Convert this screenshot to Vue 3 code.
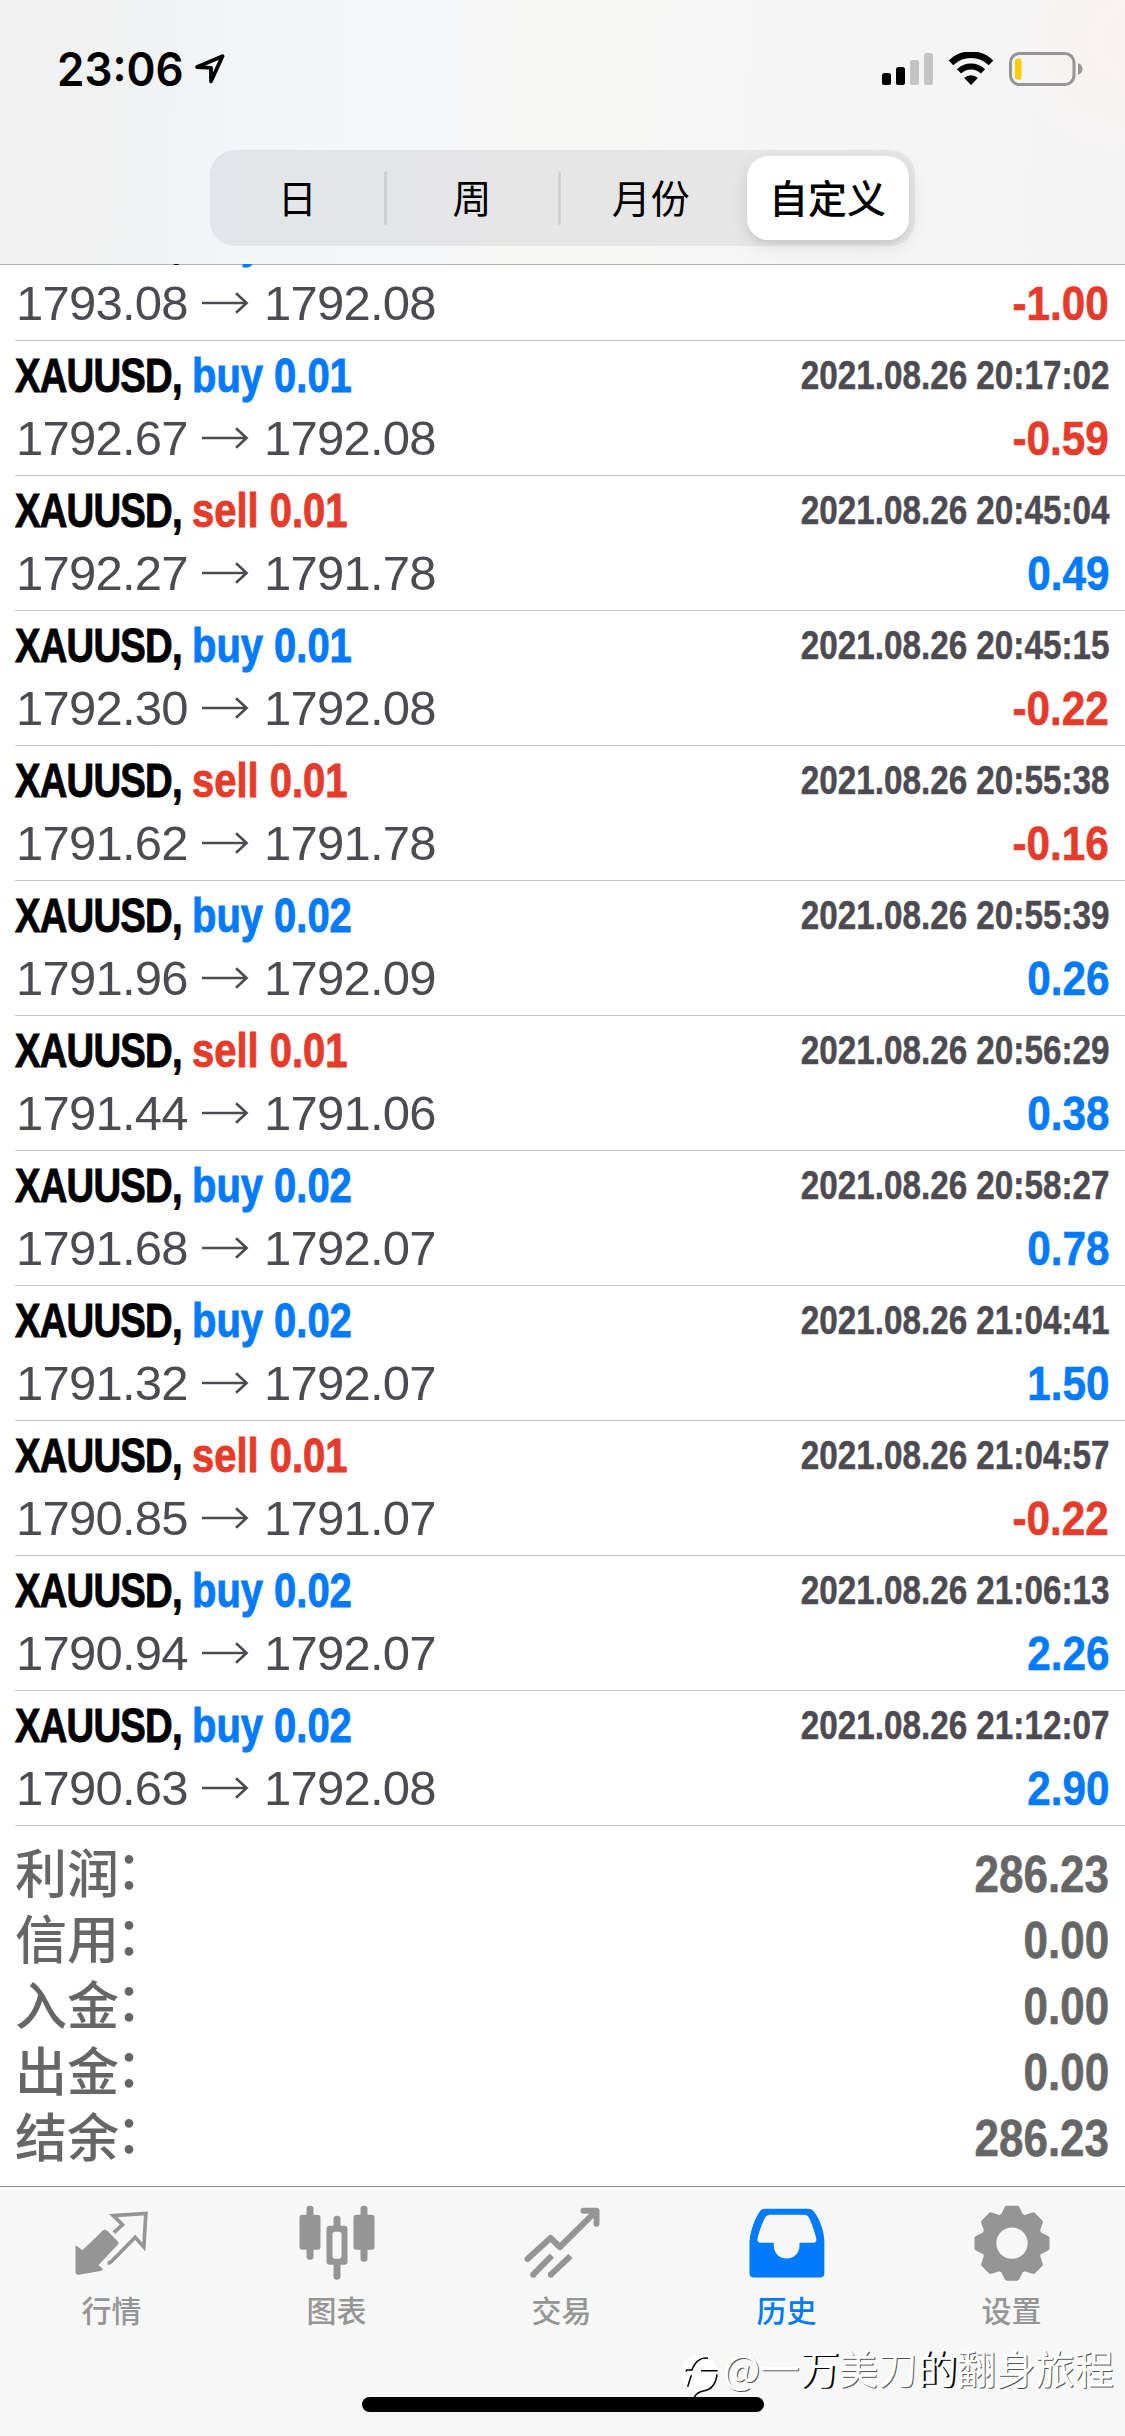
<script setup>
const segments = ['日', '周', '月份', '自定义']

const deals = [
  { side: 'buy', lot: '0.01', time: '', open: '1793.08', close: '1792.08', profit: '-1.00' },
  { side: 'buy', lot: '0.01', time: '2021.08.26 20:17:02', open: '1792.67', close: '1792.08', profit: '-0.59' },
  { side: 'sell', lot: '0.01', time: '2021.08.26 20:45:04', open: '1792.27', close: '1791.78', profit: '0.49' },
  { side: 'buy', lot: '0.01', time: '2021.08.26 20:45:15', open: '1792.30', close: '1792.08', profit: '-0.22' },
  { side: 'sell', lot: '0.01', time: '2021.08.26 20:55:38', open: '1791.62', close: '1791.78', profit: '-0.16' },
  { side: 'buy', lot: '0.02', time: '2021.08.26 20:55:39', open: '1791.96', close: '1792.09', profit: '0.26' },
  { side: 'sell', lot: '0.01', time: '2021.08.26 20:56:29', open: '1791.44', close: '1791.06', profit: '0.38' },
  { side: 'buy', lot: '0.02', time: '2021.08.26 20:58:27', open: '1791.68', close: '1792.07', profit: '0.78' },
  { side: 'buy', lot: '0.02', time: '2021.08.26 21:04:41', open: '1791.32', close: '1792.07', profit: '1.50' },
  { side: 'sell', lot: '0.01', time: '2021.08.26 21:04:57', open: '1790.85', close: '1791.07', profit: '-0.22' },
  { side: 'buy', lot: '0.02', time: '2021.08.26 21:06:13', open: '1790.94', close: '1792.07', profit: '2.26' },
  { side: 'buy', lot: '0.02', time: '2021.08.26 21:12:07', open: '1790.63', close: '1792.08', profit: '2.90' },
]

const totals = [
  ['利润', '286.23'],
  ['信用', '0.00'],
  ['入金', '0.00'],
  ['出金', '0.00'],
  ['结余', '286.23'],
]

// Outline of the settings gear: eight teeth around (120, 120).
const gear = Array.from({ length: 8 }, (_, i) => {
  const a = (i * Math.PI) / 4
  return [[-27, -81], [-15, -105], [15, -105], [27, -81]]
    .map(([x, y]) => {
      const px = 120 + x * Math.cos(a) - y * Math.sin(a)
      const py = 120 + x * Math.sin(a) + y * Math.cos(a)
      return `${px.toFixed(1)},${py.toFixed(1)}`
    })
    .join(' ')
}).join(' ')
</script>

<template>
  <div class="screen">
    <header class="top">
      <div class="status">
        <span class="clock">23:06</span>
        <svg class="locate" width="30" height="30" viewBox="0 0 30 30">
          <path d="M2 13 27.5 2.2 16 27.3V13.9Z" fill="none" stroke="#000" stroke-width="3.8" stroke-linejoin="round" />
        </svg>
        <svg class="signal" width="52" height="34" viewBox="0 0 52 34">
          <rect x="0" y="21" width="9" height="12" rx="2.6" />
          <rect x="14" y="15" width="9" height="18" rx="2.6" />
          <rect x="28" y="8" width="9" height="25" rx="2.6" fill="#c4c4c4" />
          <rect x="42" y="1" width="9" height="32" rx="2.6" fill="#c4c4c4" />
        </svg>
        <svg class="wifi" width="46" height="34" viewBox="0 0 46 34">
          <path d="M3 10.8A28.5 28.5 0 0 1 43 10.8" fill="none" stroke="#000" stroke-width="6.6" />
          <path d="M11 19.4A17.2 17.2 0 0 1 35 19.4" fill="none" stroke="#000" stroke-width="6.2" />
          <path d="M16.2 26A10 10 0 0 1 29.8 26L23 33Z" />
        </svg>
        <svg class="battery" width="75" height="34" viewBox="0 0 75 34">
          <rect x="1.5" y="1.5" width="63.5" height="31" rx="9" fill="none" stroke="#969494" stroke-width="3" />
          <rect x="6" y="6.5" width="6.5" height="21" rx="2.6" fill="#fc0" />
          <path d="M69 11.2Q73.5 13.2 73.5 17T69 23Z" fill="#969494" />
        </svg>
      </div>
      <div class="segments">
        <div v-for="(s, i) in segments" :key="s" :class="['segment', { on: i === 3, split: i === 1 || i === 2 }]">
          <span>{{ s }}</span>
        </div>
      </div>
    </header>

    <main class="history">
      <div v-for="(d, i) in deals" :key="i" class="deal">
        <div class="line head">
          <div class="symbol"><b>XAUUSD,</b></div>
          <b :class="['order', d.side]">{{ d.side }} {{ d.lot }}</b>
          <b class="time">{{ d.time }}</b>
        </div>
        <div class="line body">
          <span class="open">{{ d.open }}</span>
          <svg class="to" width="47" height="22" viewBox="0 0 47 22">
            <path d="M0 11H44M34 1.2 44.6 11 34 20.8" fill="none" stroke="#4d4b51" stroke-width="2.6" />
          </svg>
          <span>{{ d.close }}</span>
          <b :class="['profit', { loss: d.profit.startsWith('-') }]">{{ d.profit }}</b>
        </div>
      </div>
      <div class="totals">
        <div v-for="[label, value] in totals" :key="label" class="total">
          <span class="label">{{ label }}</span>
          <span class="colon">：</span>
          <b>{{ value }}</b>
        </div>
      </div>
    </main>

    <nav class="tabs">
      <div class="tab">
        <svg width="80" height="80" viewBox="217.5 70 240 240">
          <path d="M225 200Q225 196 229 199L246 212 306 153Q313 147 320 153L351 184Q357 190 351 196L294 256 306 267Q309 271 303 273L236 285Q225 286 225 276Z" fill="currentColor" />
          <path d="M340 159 366 135 338 108 436 101.5 430 202 404 173 331 247Q328 250 321 250" fill="none" stroke="currentColor" stroke-width="11" />
        </svg>
        <span>行情</span>
      </div>
      <div class="tab">
        <svg width="80" height="80" viewBox="892.5 70 240 240" fill="currentColor">
          <rect x="897" y="105" width="63" height="105" rx="9" />
          <rect x="918" y="78" width="21" height="162" rx="9" />
          <path d="M987 138H1032Q1041 138 1041 147V246Q1041 255 1032 255H987Q978 255 978 246V147Q978 138 987 138ZM1003 156Q996 156 996 164V229Q996 237 1003 237H1016Q1023 237 1023 229V164Q1023 156 1016 156Z" fill-rule="evenodd" />
          <path d="M999 142V117Q999 108 1009.5 108T1020 117V142ZM999 251V291Q999 300 1009.5 300T1020 291V251Z" />
          <rect x="1059" y="105" width="63" height="105" rx="9" />
          <rect x="1080" y="78" width="21" height="168" rx="9" />
        </svg>
        <span>图表</span>
      </div>
      <div class="tab">
        <svg width="80" height="80" viewBox="367.5 70 240 240" fill="none" stroke="currentColor" stroke-width="18">
          <path d="M381 238 450 175 478 202 586 95M549 93H588V132" stroke-linecap="round" stroke-linejoin="round" />
          <path d="M398 285 454 228M451 285 510 229" />
          <path d="M398 285h.1M451 285h.1" stroke-linecap="round" />
        </svg>
        <span>交易</span>
      </div>
      <div class="tab active">
        <svg width="80" height="80" viewBox="262.5 70 240 240">
          <path d="M267 185C270 150 284 115 299 94Q305 87 315 87H442Q453 87 459 94C475 115 491 150 491.5 185V280Q491.5 293.5 478 293.5H281Q267 293.5 267 280ZM328 105Q318 105 314 113C304 133 296 155 291 176Q289 189 300 189H340V198C341 249 416 249 417 198V189H459Q470 188 467 175C462 155 455 135 446 115Q441 105 431 105Z" fill="currentColor" fill-rule="evenodd" />
        </svg>
        <span>历史</span>
      </div>
      <div class="tab">
        <svg width="80" height="80" viewBox="3 -.5 240 240">
          <polygon :points="gear" fill="currentColor" stroke="currentColor" stroke-width="15" stroke-linejoin="round" />
          <circle cx="120" cy="120" r="47" fill="#f7f7f7" />
        </svg>
        <span>设置</span>
      </div>
      <div class="watermark">
        <svg width="40" height="46" viewBox="60 518 120 138">
          <path d="M62 577A55 55 0 1 1 172 577C170 610 155 628 128 633L103 652 107 630 84 620A55 55 0 0 1 62 577Z" fill="#fff" />
          <path d="M78 574 80 569H96C104 545 122 529 144 534M123 571H173M94 585 83 619M171 582C168 610 154 628 130 632Q112 635 103 650" fill="none" stroke="#000" stroke-width="4.5" />
        </svg>
        <span class="handle">@一<em>万</em>美刀<em>的</em>翻身旅程</span>
      </div>
      <div class="home"></div>
    </nav>
  </div>
</template>

<style>
body {
  margin: 0;
  background: #fff;
}
</style>

<style scoped>
.screen {
  width: 1125px;
  height: 2436px;
  display: flex;
  flex-direction: column;
  overflow: hidden;
  background: #fff;
  font-family: "Liberation Sans", "Noto Sans CJK SC", sans-serif;
}

.top {
  height: 264px;
  flex: none;
  box-sizing: border-box;
  background:
    radial-gradient(circle at 100% 15%, rgba(252, 241, 241, .7), rgba(252, 241, 241, 0) 120px),
    linear-gradient(92deg, #f0f0f0 0, #f1f2f3 13%, #f3f5f8 22%, #f4f6fa 32%, #f7f7f6 46%, #f7f7f6 54%, #f5f5f5 75%, #f5f4f4 100%);
}

.status {
  height: 150px;
  display: flex;
  align-items: flex-start;
  padding-left: 57px;
}

.status svg {
  flex: none;
  margin-top: 52px;
}

.clock {
  width: 138px;
  margin-top: 41px;
  font: 600 46px/56px Inter, sans-serif;
  white-space: nowrap;
  transform: scaleX(.957);
  transform-origin: left;
}

.status .locate {
  margin-top: 54px;
}

.signal {
  margin-left: 657px;
}

.wifi {
  margin-left: 14px;
}

.battery {
  margin-left: 15px;
}

.segments {
  width: 705px;
  height: 96px;
  margin-left: 210px;
  display: flex;
  border-radius: 25px;
  background: linear-gradient(90deg, #e2e5e9, #e4e5e8 25%, #e6e6e6 50%, #e6e6e6);
}

.segment {
  flex: 1;
  display: flex;
  align-items: center;
  justify-content: center;
  position: relative;
  box-sizing: border-box;
  padding-bottom: 4px;
  font: 400 39px/60px "Noto Sans CJK SC", sans-serif;
}

.segment:nth-child(3) {
  padding-left: 4px;
}

.segment.split::before {
  content: "";
  position: absolute;
  left: -1px;
  top: 21px;
  width: 3px;
  height: 54px;
  border-radius: 2px;
  background: #cfd0d3;
}

.segment.on {
  flex: none;
  width: 162px;
  margin: 6px 6px 6px 9px;
  padding-right: 1px;
  border-radius: 21px;
  background: #fff;
  font-weight: 500;
  box-shadow: 0 6px 18px rgba(0, 0, 0, .11), 0 3px 3px rgba(0, 0, 0, .04);
}

.history {
  height: 1922px;
  flex: none;
  display: flex;
  flex-direction: column;
  justify-content: flex-end;
  overflow: hidden;
  box-shadow: inset 0 1px #b0b0b1;
}

.deal {
  height: 134px;
  flex: none;
  margin-left: 15px;
  border-bottom: 1px solid #c4c4c6;
}

.line {
  display: flex;
  align-items: center;
  padding-right: 16px;
  white-space: nowrap;
}

.head {
  height: 62px;
  padding-top: 3px;
  font-size: 49px;
  line-height: 62px;
}

.symbol {
  width: 177px;
}

.symbol b {
  display: inline-block;
  letter-spacing: -1px;
  transform: scaleX(.781);
  transform-origin: left;
  -webkit-text-stroke: .9px;
}

.order {
  transform: scaleX(.815);
  transform-origin: left;
  -webkit-text-stroke: .9px;
}

.buy {
  color: #007aff;
}

.sell {
  color: #e63a2a;
}

.time {
  margin-left: auto;
  color: #4d4b51;
  font-size: 40px;
  line-height: 60px;
  transform: scaleX(.831);
  transform-origin: right;
  -webkit-text-stroke: .5px;
}

.body {
  height: 64px;
  color: #4d4b51;
  font-size: 49px;
  line-height: 64px;
  letter-spacing: -.75px;
}

.open {
  width: 186px;
  padding-left: 1px;
}

.to {
  margin: -1px 15px 0 0;
}

.profit {
  margin-left: auto;
  color: #007aff;
  letter-spacing: 0;
  transform: scaleX(.862);
  transform-origin: right;
  -webkit-text-stroke: .6px;
}

.profit.loss {
  color: #e63a2a;
}

.totals {
  flex: none;
  padding: 15px 16px 15px 15px;
}

.total {
  height: 66px;
  display: flex;
  color: #666;
  line-height: 66px;
}

.label,
.colon {
  margin-top: -3px;
  font-family: "Noto Sans CJK SC", sans-serif;
  font-size: 52px;
  font-weight: 500;
}

.colon {
  margin: -7px auto 0 -3px;
}

.total b {
  font-size: 52px;
  transform: scaleX(.846);
  transform-origin: right;
  -webkit-text-stroke: .6px;
}

.tabs {
  height: 250px;
  box-sizing: border-box;
  display: flex;
  position: relative;
  border-top: 1px solid #8c8c8c;
  background: #f7f7f7;
}

.tab {
  flex: 1;
  display: flex;
  flex-direction: column;
  align-items: center;
  padding-top: 16px;
  color: #959595;
  font: 500 30px/44px "Noto Sans CJK SC", sans-serif;
}

.tab svg {
  flex: none;
  margin-bottom: 4px;
}

.tab span {
  margin-right: 2px;
}

.tab.active {
  color: #007aff;
}

.watermark {
  position: absolute;
  left: 680px;
  top: 166px;
  display: flex;
}

.handle {
  margin: -9px 0 0 3px;
  color: #fff;
  font: 400 39.3px/46px "Noto Sans CJK SC", sans-serif;
  white-space: nowrap;
  text-shadow: 1px 1px 0 #555;
}

.handle em {
  font-style: normal;
  text-shadow: 2px 1px 0 #000;
}

.home {
  position: absolute;
  left: 362px;
  top: 210px;
  width: 402px;
  height: 15px;
  border-radius: 8px;
  background: #000;
}
</style>
